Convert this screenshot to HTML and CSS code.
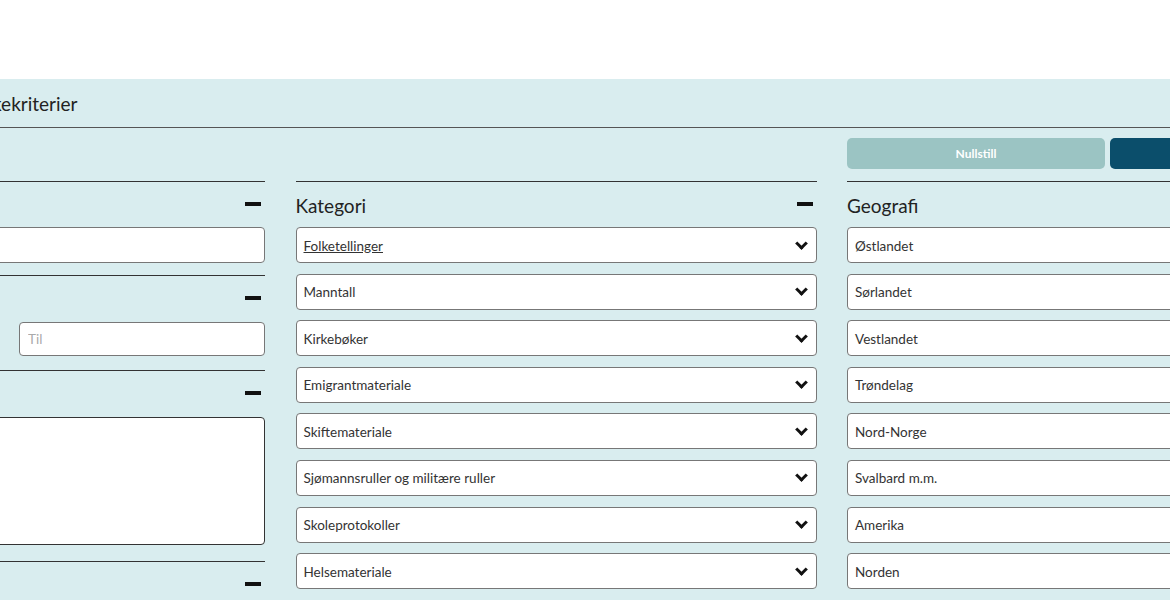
FILE: index.html
```html
<!DOCTYPE html>
<html lang="no">
<head>
<meta charset="utf-8">
<title>Søkekriterier</title>
<link rel="stylesheet" href="styles.css">
</head>
<body>
<div class="top"></div>
<main class="panel">
  <div class="inner">
    <div class="title-row"><h1 class="title">Søkekriterier</h1></div>
    <div class="grid">
      <div class="actions-spacer"></div>
      <div class="actions-spacer"></div>
      <div class="actions">
        <button class="btn btn-reset" type="button">Nullstill</button>
        <button class="btn btn-search" type="button">Søk</button>
      </div>

      <div class="col">
        <section class="sec">
          <div class="sec-head"><h2>Fritekst</h2><span class="minus"></span></div>
          <input class="field" type="text">
        </section>
        <section class="sec sec-range">
          <div class="sec-head"><h2>Periode</h2><span class="minus"></span></div>
          <div class="range">
            <input class="field" type="text" placeholder="Fra">
            <input class="field" type="text" placeholder="Til">
          </div>
        </section>
        <section class="sec">
          <div class="sec-head"><h2>Sted</h2><span class="minus"></span></div>
          <div class="area"></div>
        </section>
        <section class="sec">
          <div class="sec-head"><h2>Kilde</h2><span class="minus"></span></div>
        </section>
      </div>

      <div class="col">
        <section class="sec">
          <div class="sec-head"><h2>Kategori</h2><span class="minus"></span></div>
          <div class="list">
            <div class="sel"><span class="u">Folketellinger</span><span class="chev"></span></div>
            <div class="sel"><span>Manntall</span><span class="chev"></span></div>
            <div class="sel"><span>Kirkebøker</span><span class="chev"></span></div>
            <div class="sel"><span>Emigrantmateriale</span><span class="chev"></span></div>
            <div class="sel"><span>Skiftemateriale</span><span class="chev"></span></div>
            <div class="sel"><span>Sjømannsruller og militære ruller</span><span class="chev"></span></div>
            <div class="sel"><span>Skoleprotokoller</span><span class="chev"></span></div>
            <div class="sel"><span>Helsemateriale</span><span class="chev"></span></div>
          </div>
        </section>
      </div>

      <div class="col">
        <section class="sec">
          <div class="sec-head"><h2>Geografi</h2><span class="minus"></span></div>
          <div class="list">
            <div class="sel"><span>Østlandet</span><span class="chev"></span></div>
            <div class="sel"><span>Sørlandet</span><span class="chev"></span></div>
            <div class="sel"><span>Vestlandet</span><span class="chev"></span></div>
            <div class="sel"><span>Trøndelag</span><span class="chev"></span></div>
            <div class="sel"><span>Nord-Norge</span><span class="chev"></span></div>
            <div class="sel"><span>Svalbard m.m.</span><span class="chev"></span></div>
            <div class="sel"><span>Amerika</span><span class="chev"></span></div>
            <div class="sel"><span>Norden</span><span class="chev"></span></div>
          </div>
        </section>
      </div>
    </div>
  </div>
</main>
</body>
</html>
```
FILE: styles.css
```css
html, body {
  margin: 0;
  padding: 0;
  overflow: hidden;
  background: #ffffff;
  font-family: Lato, "Noto Sans", "Liberation Sans", sans-serif;
  color: #222;
}

.top {
  height: 79px;
  background: #ffffff;
}

.panel {
  background: #d9edef;
  height: 521px;
  overflow: hidden;
}

.inner {
  margin-left: -256px;
  width: 1624px;
}

.title-row {
  height: 48px;
  border-bottom: 1px solid #555;
  padding-left: 227px;
  display: flex;
  align-items: center;
}

.title {
  margin: 0;
  font-size: 19px;
  font-weight: 400;
  color: #222;
}

.grid {
  display: grid;
  grid-template-columns: 521px 521px 521px;
  column-gap: 30.5px;
}

.actions {
  display: flex;
  gap: 5px;
  padding: 10px 0 12px;
}

.btn {
  flex: 1;
  height: 31px;
  border: none;
  border-radius: 5px;
  color: #fff;
  font-family: inherit;
  font-size: 12px;
  font-weight: 700;
}

.btn-reset { background: #9bc4c3; }
.btn-search { background: #0b4e6b; }

.sec {
  border-top: 1px solid #333;
  padding-bottom: 12px;
}

.sec-range { padding-bottom: 14px; }

.sec-head {
  height: 45px;
  display: flex;
  align-items: center;
  justify-content: space-between;
}

.sec-head h2 {
  margin: 0;
  font-size: 19px;
  font-weight: 400;
  color: #222;
  padding-top: 2px;
}

.minus {
  width: 16px;
  height: 4px;
  background: #111;
  margin-right: 4px;
  margin-top: -2px;
}

.field {
  display: block;
  box-sizing: border-box;
  width: 100%;
  height: 36px;
  margin: 0;
  border: 1px solid #777;
  border-radius: 4px;
  background: #fff;
  padding: 0 8px;
  font-family: inherit;
  font-size: 13.5px;
  color: #333;
}

.field::placeholder { color: #aaa; }

.range {
  display: grid;
  grid-template-columns: 1fr 246px;
  column-gap: 24px;
  margin-top: 1px;
}

.range .field { height: 34px; }

.area {
  box-sizing: border-box;
  height: 128px;
  border: 1px solid #333;
  border-radius: 4px;
  background: #fff;
  margin: 1px 0 4px;
}

.list {
  display: flex;
  flex-direction: column;
  gap: 10.6px;
}

.sel {
  box-sizing: border-box;
  height: 36px;
  border: 1px solid #777;
  border-radius: 4px;
  background: #fff;
  display: flex;
  align-items: center;
  justify-content: space-between;
  padding: 1px 9px 0 7px;
  font-size: 13.5px;
  color: #333;
}

.u { text-decoration: underline; }

.chev {
  width: 6px;
  height: 6px;
  border-right: 3px solid #111;
  border-bottom: 3px solid #111;
  transform: rotate(45deg);
  margin: -5px 1px 0 0;
}
```
